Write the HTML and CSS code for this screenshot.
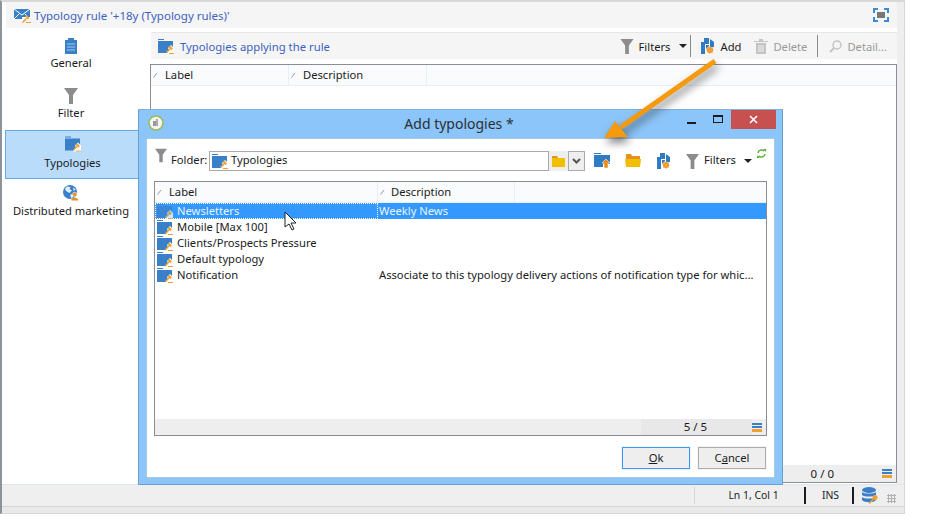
FILE: index.html
```html
<!DOCTYPE html>
<html lang="en">
  <head>
    <meta charset="UTF-8" />
    <meta name="viewport" content="width=device-width, initial-scale=1.0" />
    <title>Typology rule</title>
    <link rel="stylesheet" href="styles.css">
  </head>
  <body>
    <svg class="defs" width="0" height="0">
      <symbol id="typology" viewBox="0 0 16 15">
        <path d="M0 0h6v1H0z" fill="#3a80c8"/>
        <path d="M0 2h15v12H0z" fill="#3a80c8"/>
        <path d="M8 15l3-4-1-2 3-3 3 3v6z" fill="#fff"/>
        <path d="M8.500 13.500l4-4" stroke="#f0a030" stroke-width="1.500" fill="none"/>
        <path d="M10.500 8l1.500-1.500 3 3L13.500 11z" fill="#f0a030"/>
        <path d="M11 14h5v1h-5z" fill="#f0a030"/>
      </symbol>
      <symbol id="funnel" viewBox="0 0 14 16">
        <path d="M0 0h14L9 7v9H5V7z" fill="#8c8c8c"/>
      </symbol>
      <symbol id="addfile" viewBox="0 0 13 16">
        <path d="M0 4h3V0h5v6H4v10H0z" fill="#2f7cc4"/>
        <path d="M9 1l4 3v5H9z" fill="#2f7cc4"/>
        <path d="M5 7h3v1L5 11z" fill="#2f7cc4"/>
        <circle cx="9" cy="12" r="3" fill="#f08a10"/>
        <path d="M9 8v8M5 12h8M6.200 9.200l5.600 5.600M11.800 9.200l-5.600 5.600" stroke="#f4a84a" stroke-width="0.800"/>
      </symbol>
      <symbol id="menu" viewBox="0 0 10 9">
        <path d="M0 0h10v2H0zM0 3h10v2H0z" fill="#3a80c8"/>
        <path d="M0 6h10v3H0z" fill="#f0a030"/>
      </symbol>
      <symbol id="sort" viewBox="0 0 5 6">
        <path d="M0.500 5.500L4 1" stroke="#999" fill="none"/>
      </symbol>
    </svg>

    <div class="window">
      <div class="content">
        <div class="title-bar">
          <svg class="title-icon" viewBox="0 0 17 15">
            <path d="M0 1h16v10H0z" fill="#3a80c8"/>
            <path d="M0 1l8 6 8-6M0 11l5-5M16 11l-5-5" stroke="#fff" fill="none"/>
            <path d="M8 9h8v6H8z" fill="#f5f5f5"/>
            <path d="M8.500 14.500l4-4" stroke="#f0a030" stroke-width="1.500"/>
            <path d="M11 8l1.500-1 3 3-1.500 1.500z" fill="#f0a030"/>
            <path d="M12 14h5v1h-5z" fill="#f0a030"/>
          </svg>
          <span class="title-text">Typology rule '+18y (Typology rules)'</span>
          <svg class="expand-icon" viewBox="0 0 16 14">
            <path d="M1 5V1h4M11 1h4v4M15 9v4h-4M5 13H1V9" stroke="#3a8ad8" stroke-width="2" fill="none"/>
            <path d="M4 4h8v6H4z" fill="#777"/>
          </svg>
        </div>
        <div class="columns">
          <ul class="sidebar">
            <li class="side-item side-general">
              <svg class="side-icon" viewBox="0 0 12 16">
                <path d="M0 2h3V0h6v2h3v14H0z" fill="#3a80c8"/>
                <path d="M2 6h8M2 9h8M2 12h8" stroke="#a9cdee"/>
              </svg>
              General
            </li>
            <li class="side-item side-filter">
              <svg class="side-icon funnel-side"><use href="#funnel"/></svg>
              Filter
            </li>
            <li class="side-item side-active">
              <svg class="side-icon typology-side"><use href="#typology"/></svg>
              Typologies
            </li>
            <li class="side-item side-dist">
              <svg class="side-icon" viewBox="0 0 17 16">
                <circle cx="7.500" cy="7" r="7.500" fill="#3a80c8"/>
                <path d="M4 1l4 .5-1 2.500 2.500 1L7 8 4 6.500 2 4zM8 9l3.500 1-2 4-1.500-2zM11 2l2.500 2.500-2.500 1z" fill="#e2eef9"/>
                <circle cx="12.500" cy="9.500" r="2.400" fill="#e89020" stroke="#fff" stroke-width="0.600"/>
                <path d="M9 16v-1.500l2.500-1.500h2l2.500 1.500V16z" fill="#e89020"/>
              </svg>
              Distributed marketing
            </li>
          </ul>
          <div class="main">
            <div class="toolbar">
              <svg class="icon-16"><use href="#typology"/></svg>
              <span class="toolbar-title">Typologies applying the rule</span>
              <svg class="tool-funnel"><use href="#funnel"/></svg>
              <span class="tool-label filters-label">Filters</span>
              <span class="caret"></span>
              <span class="tool-sep sep-a"></span>
              <svg class="tool-add"><use href="#addfile"/></svg>
              <span class="tool-label add-label">Add</span>
              <svg class="tool-trash" viewBox="0 0 14 15">
                <path d="M0 2h14v1H0zM5 0h4v2H5z" fill="#c4c4c4"/>
                <path d="M2 4h10v11H2z" fill="#c4c4c4"/>
                <path d="M5 6v7M7 6v7M9 6v7" stroke="#eee"/>
              </svg>
              <span class="tool-label tool-off delete-label">Delete</span>
              <span class="tool-sep sep-b"></span>
              <svg class="tool-lens" viewBox="0 0 13 13">
                <circle cx="8" cy="5" r="4" fill="none" stroke="#c4c4c4" stroke-width="1.500"/>
                <path d="M5 8l-4 4" stroke="#c4c4c4" stroke-width="2"/>
              </svg>
              <span class="tool-label tool-off">Detail...</span>
            </div>
            <div class="grid main-grid">
              <div class="grid-head">
                <div class="head-cell main-label"><svg class="sort"><use href="#sort"/></svg>Label</div>
                <div class="head-cell main-desc"><svg class="sort"><use href="#sort"/></svg>Description</div>
              </div>
              <div class="grid-rows"></div>
              <div class="grid-foot main-foot">
                <span class="count">0 / 0</span>
                <svg class="foot-menu"><use href="#menu"/></svg>
              </div>
            </div>
          </div>
        </div>
      </div>
      <div class="status-bar">
        <span class="status-cell status-pos">Ln 1, Col 1</span>
        <span class="status-cell status-ins">INS</span>
        <svg class="status-db" viewBox="0 0 16 17">
          <ellipse cx="7" cy="3" rx="7" ry="3" fill="#3a80c8"/>
          <path d="M0 5c2 2 12 2 14 0v3c-2 2-12 2-14 0zM0 10c2 2 12 2 14 0v3c-2 3-12 3-14 0z" fill="#3a80c8"/>
          <path d="M7 16.500l5-5" stroke="#f0a030" stroke-width="1.500"/>
          <circle cx="13" cy="10.500" r="2.500" fill="#f0a030"/>
        </svg>
        <span class="grip"></span>
      </div>
    </div>

    <div class="dialog">
      <div class="dialog-title">
        <svg class="app-icon" viewBox="0 0 16 16">
          <circle cx="8" cy="8" r="7" fill="#f4f4f0" stroke="#9ab85c" stroke-width="1.500"/>
          <path d="M5 6h3v5H5z" fill="#999"/>
          <path d="M9 4v7" stroke="#666"/>
        </svg>
        <span class="dialog-name">Add typologies *</span>
        <span class="win-min"></span>
        <span class="win-max"></span>
        <span class="win-close">
          <svg viewBox="0 0 9 9" class="close-x"><path d="M1 1l7 7M8 1l-7 7" stroke="#fff" stroke-width="1.600"/></svg>
        </span>
      </div>
      <div class="dialog-body">
        <div class="folder-row">
          <svg class="folder-funnel"><use href="#funnel"/></svg>
          <span class="folder-label">Folder:</span>
          <div class="folder-input">
            <svg class="icon-16"><use href="#typology"/></svg>
            <span class="folder-value">Typologies</span>
          </div>
          <div class="folder-pick">
            <svg class="yellow-folder" viewBox="0 0 13 11">
              <path d="M0 0h5l1 2h7v9H0z" fill="#f0c000"/>
              <path d="M0 0h5l1 2H0z" fill="#e89020"/>
            </svg>
          </div>
          <div class="folder-drop">
            <svg viewBox="0 0 9 6" class="drop-arrow"><path d="M1 1l3.500 3.500L8 1" stroke="#555" stroke-width="2" fill="none"/></svg>
          </div>
          <svg class="tool-up" viewBox="0 0 16 15">
            <path d="M0 0h7v1H0zM0 2h16v9H0z" fill="#2f7cc4"/>
            <path d="M0 11h9v3H0z" fill="#2f7cc4"/>
            <path d="M8 10l4-4 4 4h-2v5h-4v-5z" fill="#f08a10" stroke="#fff" stroke-width="0.500"/>
          </svg>
          <svg class="tool-open" viewBox="0 0 16 13">
            <path d="M1 0h5l1 2h8v3H1z" fill="#e89020"/>
            <path d="M0 5h16l-1 8H1z" fill="#f0c000"/>
          </svg>
          <svg class="tool-new"><use href="#addfile"/></svg>
          <svg class="tool-filter"><use href="#funnel"/></svg>
          <span class="tool-label dlg-filters">Filters</span>
          <span class="caret dlg-caret"></span>
          <svg class="tool-refresh" viewBox="0 0 9 9">
            <path d="M1 4a3.500 3.500 0 0 1 6-2M8 5a3.500 3.500 0 0 1-6 2" stroke="#58b030" stroke-width="1.500" fill="none"/>
            <path d="M6 0l3 0v3zM3 9H0V6z" fill="#58b030"/>
          </svg>
        </div>

        <div class="grid dialog-grid">
          <div class="grid-head">
            <div class="head-cell dlg-label"><svg class="sort"><use href="#sort"/></svg>Label</div>
            <div class="head-cell dlg-desc"><svg class="sort"><use href="#sort"/></svg>Description</div>
          </div>
          <div class="grid-rows">
            <div class="row row-selected">
              <div class="cell cell-label"><svg class="icon-16 row-icon"><use href="#typology"/></svg>Newsletters</div>
              <div class="cell cell-desc">Weekly News</div>
            </div>
            <div class="row">
              <div class="cell cell-label"><svg class="icon-16 row-icon"><use href="#typology"/></svg>Mobile [Max 100]</div>
              <div class="cell cell-desc"></div>
            </div>
            <div class="row">
              <div class="cell cell-label"><svg class="icon-16 row-icon"><use href="#typology"/></svg>Clients/Prospects Pressure</div>
              <div class="cell cell-desc"></div>
            </div>
            <div class="row">
              <div class="cell cell-label"><svg class="icon-16 row-icon"><use href="#typology"/></svg>Default typology</div>
              <div class="cell cell-desc"></div>
            </div>
            <div class="row">
              <div class="cell cell-label"><svg class="icon-16 row-icon"><use href="#typology"/></svg>Notification</div>
              <div class="cell cell-desc">Associate to this typology delivery actions of notification type for whic...</div>
            </div>
          </div>
          <div class="grid-foot dlg-foot">
            <span class="count-box">5 / 5</span>
            <svg class="foot-menu"><use href="#menu"/></svg>
          </div>
        </div>

        <div class="dialog-actions">
          <button class="btn btn-default" type="button"><u>O</u>k</button>
          <button class="btn" type="button">C<u>a</u>ncel</button>
        </div>
      </div>
    </div>

    <svg class="cursor" viewBox="0 0 13 20">
      <path d="M1 1v15l4-3 3 6 2-1-3-6h5z" fill="#fff" stroke="#222"/>
    </svg>

    <svg class="arrow" viewBox="0 0 130 90">
      <path d="M114 4L20 70" stroke="#f59a0c" stroke-width="5" fill="none"/>
      <path d="M3 81L14 64 27 80z" fill="#f59a0c"/>
    </svg>
  </body>
</html>
```

FILE: styles.css
```css
* {
  box-sizing: border-box;
}
html,
body {
  margin: 0;
  height: 521px;
  overflow: hidden;
  background: white;
}
body {
  font-family: "Noto Sans", "Open Sans", sans-serif;
  font-size: 11.2px;
  color: #1a1a22;
  position: relative;
}
.defs {
  position: absolute;
}
ul {
  list-style: none;
  margin: 0;
  padding: 0;
}

/* main window */
.window {
  width: 905px;
  height: 514px;
  display: flex;
  flex-direction: column;
  background: #eeeeee;
  border-top: 2px solid #d8d8d8;
  border-left: 2px solid #8d929b;
  border-right: 1px solid #d6d6d6;
  border-bottom: 1px solid #d6d6d6;
}
.content {
  flex: 1;
  margin-right: 7px;
  padding-left: 4px;
  background: white;
  display: flex;
  flex-direction: column;
  min-height: 0;
}
.title-bar {
  height: 26px;
  flex: none;
  background: #f5f5f5;
  display: flex;
  align-items: center;
  padding-left: 8px;
  padding-right: 8px;
}
.title-icon {
  width: 17px;
  height: 15px;
  margin-right: 3px;
}
.title-text {
  color: #3c62bd;
  font-size: 11.5px;
  flex: 1;
}
.expand-icon {
  width: 16px;
  height: 14px;
}
.columns {
  flex: 1;
  display: flex;
  min-height: 0;
}

/* left navigation */
.sidebar {
  width: 144px;
  flex: none;
  padding-top: 10px;
}
.side-item {
  display: flex;
  flex-direction: column;
  align-items: center;
  width: 132px;
  margin-left: -1px;
  line-height: 16px;
}
.side-icon {
  width: 16px;
  height: 16px;
  margin-bottom: 1px;
}
.side-general {
  height: 50px;
}
.side-filter {
  height: 42px;
}
.side-filter .side-icon {
  height: 16px;
  width: 14px;
  margin-bottom: 1px;
}
.side-active {
  height: 49px;
  width: 134px;
  padding-top: 5px;
  background: #b9dcfb;
  border: 1px solid #69a7e2;
  border-right: none;
}
.side-active .side-icon {
  margin-bottom: 3px;
}
.side-dist {
  padding-top: 6px;
}
.side-dist .side-icon {
  margin-bottom: 2px;
}

/* right panel */
.main {
  flex: 1;
  min-width: 0;
  display: flex;
  flex-direction: column;
  padding-top: 4px;
}
.toolbar {
  height: 27px;
  flex: none;
  margin-left: 1px;
  background: #f5f5f5;
  border-top: 1px solid #e6e6e6;
  display: flex;
  align-items: center;
  padding-left: 7px;
}
.icon-16 {
  width: 16px;
  height: 15px;
  flex: none;
}
.toolbar-title {
  color: #3c62bd;
  margin-left: 6px;
  font-size: 11.3px;
  flex: 1;
}
.tool-label {
  white-space: nowrap;
}
.tool-off {
  color: #9a9a9a;
}
.tool-funnel {
  width: 14px;
  height: 15px;
  margin-right: 5px;
}
.caret {
  width: 0;
  height: 0;
  border-left: 4px solid transparent;
  border-right: 4px solid transparent;
  border-top: 4px solid #222;
  margin-left: 9px;
}
.tool-sep {
  width: 1px;
  height: 22px;
  background: #8a8a8a;
}
.sep-a {
  margin-left: 3px;
  margin-right: 10px;
}
.tool-add {
  width: 13px;
  height: 16px;
  margin-right: 6px;
}
.tool-trash {
  width: 14px;
  height: 15px;
  margin-left: 13px;
  margin-right: 5px;
}
.sep-b {
  margin-left: 10px;
  margin-right: 11px;
}
.tool-lens {
  width: 13px;
  height: 13px;
  margin-right: 5px;
}
.toolbar .tool-off:last-child {
  margin-right: 10px;
}

/* data grids */
.grid {
  display: flex;
  flex-direction: column;
  background: white;
  border: 1px solid #8a8d96;
  min-height: 0;
}
.main-grid {
  flex: 1;
  margin-top: 5px;
  margin-bottom: 1px;
}
.grid-head {
  height: 21px;
  flex: none;
  display: flex;
  background: #fafbfc;
  border-bottom: 1px solid #e6eef8;
}
.head-cell {
  height: 100%;
  display: flex;
  align-items: center;
  border-right: 1px solid #e6eef8;
  padding-left: 2px;
  padding-bottom: 1px;
}
.sort {
  width: 5px;
  height: 6px;
  margin-right: 7px;
  flex: none;
}
.main-label {
  width: 138px;
}
.main-desc {
  width: 138px;
}
.grid-rows {
  flex: 1;
  min-height: 0;
}
.grid-foot {
  height: 17px;
  flex: none;
  background: #eeeeee;
  display: flex;
  align-items: center;
  justify-content: flex-end;
  padding-right: 4px;
}
.count {
  margin-right: 48px;
  font-size: 11.5px;
}
.foot-menu {
  width: 10px;
  height: 9px;
}

/* dialog */
.dialog {
  position: absolute;
  left: 138px;
  top: 109px;
  width: 645px;
  height: 376px;
  display: flex;
  flex-direction: column;
  background: #8bc5f9;
  border: 1px solid #6b9fcf;
  border-top-color: #7fb0dc;
}
.dialog-title {
  height: 28px;
  flex: none;
  position: relative;
  display: flex;
  align-items: flex-start;
}
.app-icon {
  width: 16px;
  height: 16px;
  margin: 5px 0 0 9px;
}
.dialog-name {
  position: absolute;
  left: 0;
  right: 0;
  top: 4px;
  text-align: center;
  font-size: 14px;
  color: #2c3036;
  padding-right: 3px;
}
.win-min {
  position: absolute;
  left: 548px;
  top: 12px;
  width: 9px;
  height: 2px;
  background: #1a1a22;
}
.win-max {
  position: absolute;
  left: 574px;
  top: 5px;
  width: 10px;
  height: 8px;
  border: 1px solid #1a1a22;
  border-top-width: 2px;
}
.win-close {
  position: absolute;
  left: 592px;
  top: 0;
  width: 45px;
  height: 19px;
  background: #c75050;
  display: flex;
  align-items: center;
  justify-content: center;
}
.close-x {
  width: 9px;
  height: 9px;
}
.dialog-body {
  flex: 1;
  margin: 0 7px 6px 7px;
  padding: 0 7px;
  background: white;
  border: 1px solid #a9c9e6;
  display: flex;
  flex-direction: column;
  min-height: 0;
}
.folder-row {
  height: 42px;
  flex: none;
  display: flex;
  align-items: flex-start;
}
.folder-funnel {
  width: 12px;
  height: 15px;
  margin-top: 9px;
  margin-left: 1px;
}
.folder-label {
  margin: 13px 3px 0 4px;
  width: 35px;
  white-space: nowrap;
}
.folder-input {
  width: 340px;
  height: 20px;
  margin-top: 12px;
  border: 1px solid #aaaaaa;
  display: flex;
  align-items: center;
  gap: 3px;
  padding-left: 2px;
}
.folder-value {
  margin-top: -3px;
}
.folder-pick {
  width: 19px;
  height: 20px;
  margin-top: 12px;
  background: #eeeeee;
  display: flex;
  align-items: center;
  justify-content: center;
}
.yellow-folder {
  width: 13px;
  height: 11px;
}
.folder-drop {
  width: 17px;
  height: 20px;
  margin-top: 12px;
  background: #eeeeee;
  border: 1px solid #aaaaaa;
  display: flex;
  align-items: center;
  justify-content: center;
}
.drop-arrow {
  width: 9px;
  height: 6px;
}
.tool-up {
  width: 16px;
  height: 15px;
  margin: 14px 0 0 9px;
}
.tool-open {
  width: 16px;
  height: 13px;
  margin: 15px 0 0 15px;
}
.tool-new {
  width: 13px;
  height: 16px;
  margin: 14px 0 0 16px;
}
.tool-filter {
  width: 13px;
  height: 15px;
  margin: 15px 0 0 16px;
}
.dlg-filters {
  margin: 13px 0 0 5px;
}
.dlg-caret {
  margin-top: 20px;
  margin-left: 8px;
}
.tool-refresh {
  width: 9px;
  height: 9px;
  margin: 10px 0 0 5px;
}
.dialog-grid {
  height: 255px;
  flex: none;
}
.dlg-label {
  width: 223px;
}
.dlg-desc {
  width: 137px;
}
.dlg-desc .sort {
  margin-right: 6px;
}
.row {
  display: flex;
  height: 16px;
  line-height: 16px;
}
.cell {
  white-space: nowrap;
  overflow: hidden;
}
.cell-label {
  width: 223px;
  display: flex;
  align-items: center;
  padding-left: 2px;
}
.row-icon {
  margin-right: 4px;
}
.cell-desc {
  flex: 1;
  padding-left: 1px;
}
.row-selected {
  background: #3399ff;
  color: #e8f3ff;
}
.row-selected .cell {
  outline: 1px dotted #ffffff;
  outline-offset: -1px;
}
.row-selected .cell-desc {
  outline: none;
}
.row-selected .row-icon {
  opacity: 0.75;
}
.dlg-foot {
  height: 16px;
}
.count-box {
  width: 111px;
  height: 100%;
  text-align: center;
  padding-right: 2px;
  line-height: 16px;
  font-size: 11.5px;
  background: #e8e8e8;
  flex: none;
}
.dialog-actions {
  flex: 1;
  display: flex;
  justify-content: flex-end;
  gap: 8px;
  padding-top: 11px;
  padding-right: 1px;
}
.btn {
  width: 68px;
  height: 22px;
  padding: 0 0 2px;
  font: inherit;
  color: inherit;
  background: #eeeeee;
  border: 1px solid #acacac;
  box-shadow: 0 0 0 1px #f4f4f4;
}
.btn-default {
  border-color: #3399ff;
}

/* status bar */
.status-bar {
  height: 29px;
  flex: none;
  border-top: 1px solid #dfe6ec;
  display: flex;
  align-items: flex-start;
  background: linear-gradient(#efefef 21px, #d4d4d4 21px, #d4d4d4 22px, #e9e9e9 22px);
  font-size: 10.4px;
  position: relative;
}
.status-cell {
  height: 17px;
  margin-top: 2px;
  text-align: center;
  line-height: 17px;
}
.status-pos {
  margin-left: 692px;
  width: 112px;
  padding-left: 8px;
  border-left: 1px solid #d4d4d4;
  border-right: 2px solid #1a1a22;
}
.status-ins {
  width: 48px;
  padding-left: 3px;
  border-right: 2px solid #1a1a22;
}
.status-db {
  width: 16px;
  height: 17px;
  margin: 2px 0 0 8px;
}
.grip {
  position: absolute;
  right: 8px;
  top: 9px;
  width: 9px;
  height: 9px;
  background: radial-gradient(circle, #b0b0b0 1px, transparent 1.2px) 0 0 / 3px 3px;
}

/* things on top */
.cursor {
  position: absolute;
  left: 284px;
  top: 211px;
  width: 13px;
  height: 20px;
}
.arrow {
  position: absolute;
  left: 601px;
  top: 57px;
  width: 130px;
  height: 90px;
  filter: drop-shadow(2px 5px 4px rgba(40, 40, 40, 0.6));
}
```
